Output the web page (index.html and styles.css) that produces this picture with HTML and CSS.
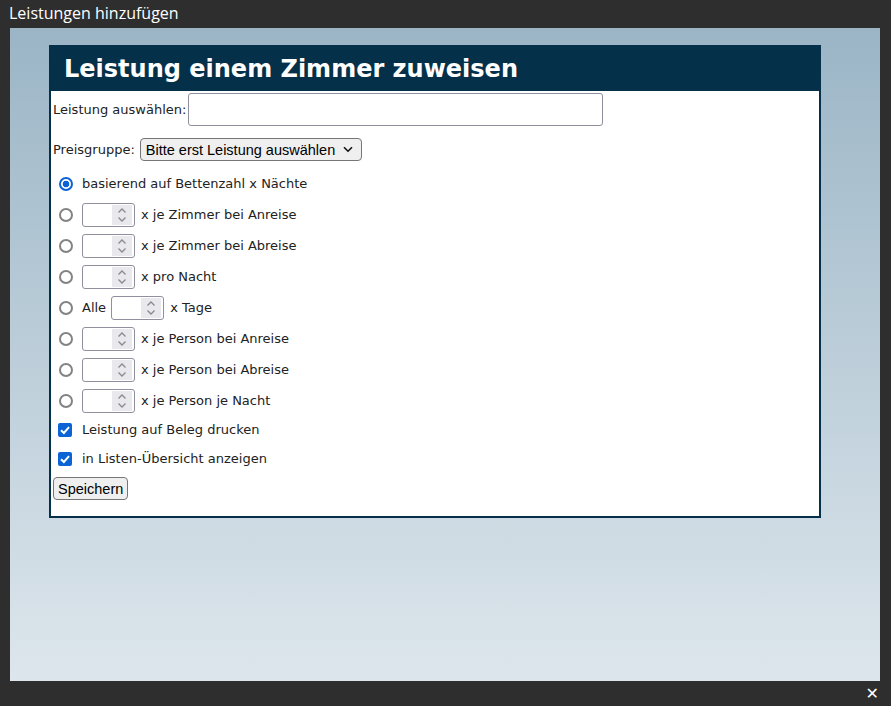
FILE: index.html
```html
<!DOCTYPE html>
<html lang="de">
<head>
<meta charset="utf-8">
<title>Leistungen hinzufügen</title>
<link rel="stylesheet" href="styles.css">
</head>
<body>
<div class="frame">
  <div class="titlebar">Leistungen hinzufügen</div>
  <div class="content">
    <div class="panel">
      <h1 class="panel-title">Leistung einem Zimmer zuweisen</h1>
      <div class="panel-body">
        <div class="row-service">
          <label class="lbl" for="svc">Leistung auswählen:</label>
          <input class="svc-input" id="svc" type="text">
        </div>
        <div class="row-price">
          <label class="lbl" for="pg">Preisgruppe:</label>
          <span class="select-wrap">
            <select class="pg-select" id="pg"><option>Bitte erst Leistung auswählen</option></select>
            <svg class="chev" width="10" height="7" viewBox="0 0 10 7"><path d="M1 1.2 L5 5.2 L9 1.2" fill="none" stroke="#111" stroke-width="1.6"/></svg>
          </span>
        </div>
        <div class="opt"><input class="radio" type="radio" name="m" checked><span class="txt">basierend auf Bettenzahl x Nächte</span></div>
        <div class="opt"><input class="radio" type="radio" name="m"><span class="num"><input type="text"><span class="spin"><svg width="10" height="16" viewBox="0 0 10 16"><path d="M1.5 5.5 L5 2 L8.5 5.5 M1.5 10.5 L5 14 L8.5 10.5" fill="none" stroke="#8a8a8a" stroke-width="1.3"/></svg></span></span><span class="txt">x je Zimmer bei Anreise</span></div>
        <div class="opt"><input class="radio" type="radio" name="m"><span class="num"><input type="text"><span class="spin"><svg width="10" height="16" viewBox="0 0 10 16"><path d="M1.5 5.5 L5 2 L8.5 5.5 M1.5 10.5 L5 14 L8.5 10.5" fill="none" stroke="#8a8a8a" stroke-width="1.3"/></svg></span></span><span class="txt">x je Zimmer bei Abreise</span></div>
        <div class="opt"><input class="radio" type="radio" name="m"><span class="num"><input type="text"><span class="spin"><svg width="10" height="16" viewBox="0 0 10 16"><path d="M1.5 5.5 L5 2 L8.5 5.5 M1.5 10.5 L5 14 L8.5 10.5" fill="none" stroke="#8a8a8a" stroke-width="1.3"/></svg></span></span><span class="txt">x pro Nacht</span></div>
        <div class="opt"><input class="radio" type="radio" name="m"><span class="txt pre">Alle</span><span class="num"><input type="text"><span class="spin"><svg width="10" height="16" viewBox="0 0 10 16"><path d="M1.5 5.5 L5 2 L8.5 5.5 M1.5 10.5 L5 14 L8.5 10.5" fill="none" stroke="#8a8a8a" stroke-width="1.3"/></svg></span></span><span class="txt">x Tage</span></div>
        <div class="opt"><input class="radio" type="radio" name="m"><span class="num"><input type="text"><span class="spin"><svg width="10" height="16" viewBox="0 0 10 16"><path d="M1.5 5.5 L5 2 L8.5 5.5 M1.5 10.5 L5 14 L8.5 10.5" fill="none" stroke="#8a8a8a" stroke-width="1.3"/></svg></span></span><span class="txt">x je Person bei Anreise</span></div>
        <div class="opt"><input class="radio" type="radio" name="m"><span class="num"><input type="text"><span class="spin"><svg width="10" height="16" viewBox="0 0 10 16"><path d="M1.5 5.5 L5 2 L8.5 5.5 M1.5 10.5 L5 14 L8.5 10.5" fill="none" stroke="#8a8a8a" stroke-width="1.3"/></svg></span></span><span class="txt">x je Person bei Abreise</span></div>
        <div class="opt"><input class="radio" type="radio" name="m"><span class="num"><input type="text"><span class="spin"><svg width="10" height="16" viewBox="0 0 10 16"><path d="M1.5 5.5 L5 2 L8.5 5.5 M1.5 10.5 L5 14 L8.5 10.5" fill="none" stroke="#8a8a8a" stroke-width="1.3"/></svg></span></span><span class="txt">x je Person je Nacht</span></div>
        <div class="chk"><span class="box"><svg width="14" height="14" viewBox="0 0 14 14"><path d="M3 7.2 L5.9 10 L11 4.2" fill="none" stroke="#fff" stroke-width="2"/></svg></span><span class="txt">Leistung auf Beleg drucken</span></div>
        <div class="chk"><span class="box"><svg width="14" height="14" viewBox="0 0 14 14"><path d="M3 7.2 L5.9 10 L11 4.2" fill="none" stroke="#fff" stroke-width="2"/></svg></span><span class="txt">in Listen-Übersicht anzeigen</span></div>
        <button class="save" type="button">Speichern</button>
      </div>
    </div>
  </div>
  <div class="bottombar"><span class="close">✕</span></div>
</div>
</body>
</html>
```
FILE: styles.css
```css
html, body {
  margin: 0;
  padding: 0;
  background: #2e2e2e;
}
.frame {
  width: 891px;
  height: 706px;
  display: flex;
  flex-direction: column;
  background: #2e2e2e;
}
.titlebar {
  height: 28px;
  line-height: 27px;
  padding-left: 9px;
  color: #ffffff;
  font-family: "Open Sans", "Noto Sans", sans-serif;
  font-size: 16px;
}
.content {
  margin: 0 11px 0 10px;
  height: 653px;
  background: linear-gradient(to bottom, #9bb5c6 0%, #dde6ec 100%);
  padding: 17px 0 0 39px;
  box-sizing: border-box;
}
.panel {
  width: 772px;
  border: 2px solid #05304a;
  background: #ffffff;
  box-sizing: border-box;
}
.panel-title {
  margin: 0;
  height: 44px;
  background: #05304a;
  color: #ffffff;
  font-family: "DejaVu Sans", Verdana, sans-serif;
  font-weight: bold;
  font-size: 24px;
  line-height: 44px;
  padding-left: 13px;
}
.panel-body {
  padding: 2px 2px 16px 2px;
  font-family: "DejaVu Sans", Verdana, sans-serif;
  font-size: 13px;
  color: #222222;
}
.row-service {
  display: flex;
  align-items: center;
  height: 33px;
}
.lbl {
  padding-right: 1px;
}
.svc-input {
  margin: 0 0 0 1px;
  width: 415px;
  height: 33px;
  box-sizing: border-box;
  border: 1px solid #8f8f9d;
  border-radius: 3px;
}
.row-price {
  display: flex;
  align-items: center;
  margin-top: 12px;
  height: 23px;
}
.select-wrap {
  position: relative;
  margin-left: 4px;
  display: inline-block;
  height: 23px;
}
.pg-select {
  appearance: none;
  -webkit-appearance: none;
  width: 222px;
  height: 23px;
  padding: 0 0 0 5px;
  font-family: "Liberation Sans", Arial, sans-serif;
  font-size: 14.5px;
  color: #000;
  border: 1px solid #767676;
  border-radius: 4px;
  background: #efefef;
}
.chev {
  position: absolute;
  right: 9px;
  top: 8px;
}
.opt {
  display: flex;
  align-items: center;
  height: 31px;
}
.row-price + .opt {
  margin-top: 7px;
}
.radio {
  appearance: none;
  -webkit-appearance: none;
  margin: 0 9px 0 6px;
  width: 14px;
  height: 14px;
  border: 2px solid #838383;
  border-radius: 50%;
  box-sizing: border-box;
  background: #fff;
  flex: none;
}
.radio:checked {
  border-color: #0b63d6;
  background: radial-gradient(circle, #0b63d6 0 3.2px, #fff 3.6px);
}
.num {
  display: inline-flex;
  align-items: center;
  margin: 0 6px 0 0;
  width: 53px;
  height: 24px;
  box-sizing: border-box;
  border: 1px solid #8f8f9d;
  border-radius: 3px;
  padding: 2px 2px 2px 0;
  background: #fff;
}
.num input {
  border: none;
  outline: none;
  width: 29px;
  height: 18px;
  padding: 0;
  margin: 0;
  background: transparent;
}
.spin {
  display: flex;
  align-items: center;
  justify-content: center;
  width: 20px;
  height: 20px;
  background: #e9e9ed;
  margin-left: auto;
}
.pre {
  margin-right: 5px;
}
.chk {
  display: flex;
  align-items: center;
  height: 29px;
}
.opt + .chk {
  margin-top: -1px;
}
.box {
  display: inline-flex;
  width: 14px;
  height: 14px;
  margin: 0 10px 0 5px;
  border-radius: 2px;
  background: #0b63d6;
  flex: none;
}
.save {
  margin-top: 4px;
  font-family: "Liberation Sans", Arial, sans-serif;
  font-size: 14.5px;
  height: 23px;
  padding: 0 4px;
  border: 1px solid #767676;
  border-radius: 4px;
  background: #efefef;
  color: #000;
}
.bottombar {
  height: 25px;
  display: flex;
  justify-content: flex-end;
  align-items: center;
  padding-right: 12px;
}
.close {
  color: #ffffff;
  font-family: "DejaVu Sans", sans-serif;
  font-size: 16px;
  font-weight: bold;
}
```
